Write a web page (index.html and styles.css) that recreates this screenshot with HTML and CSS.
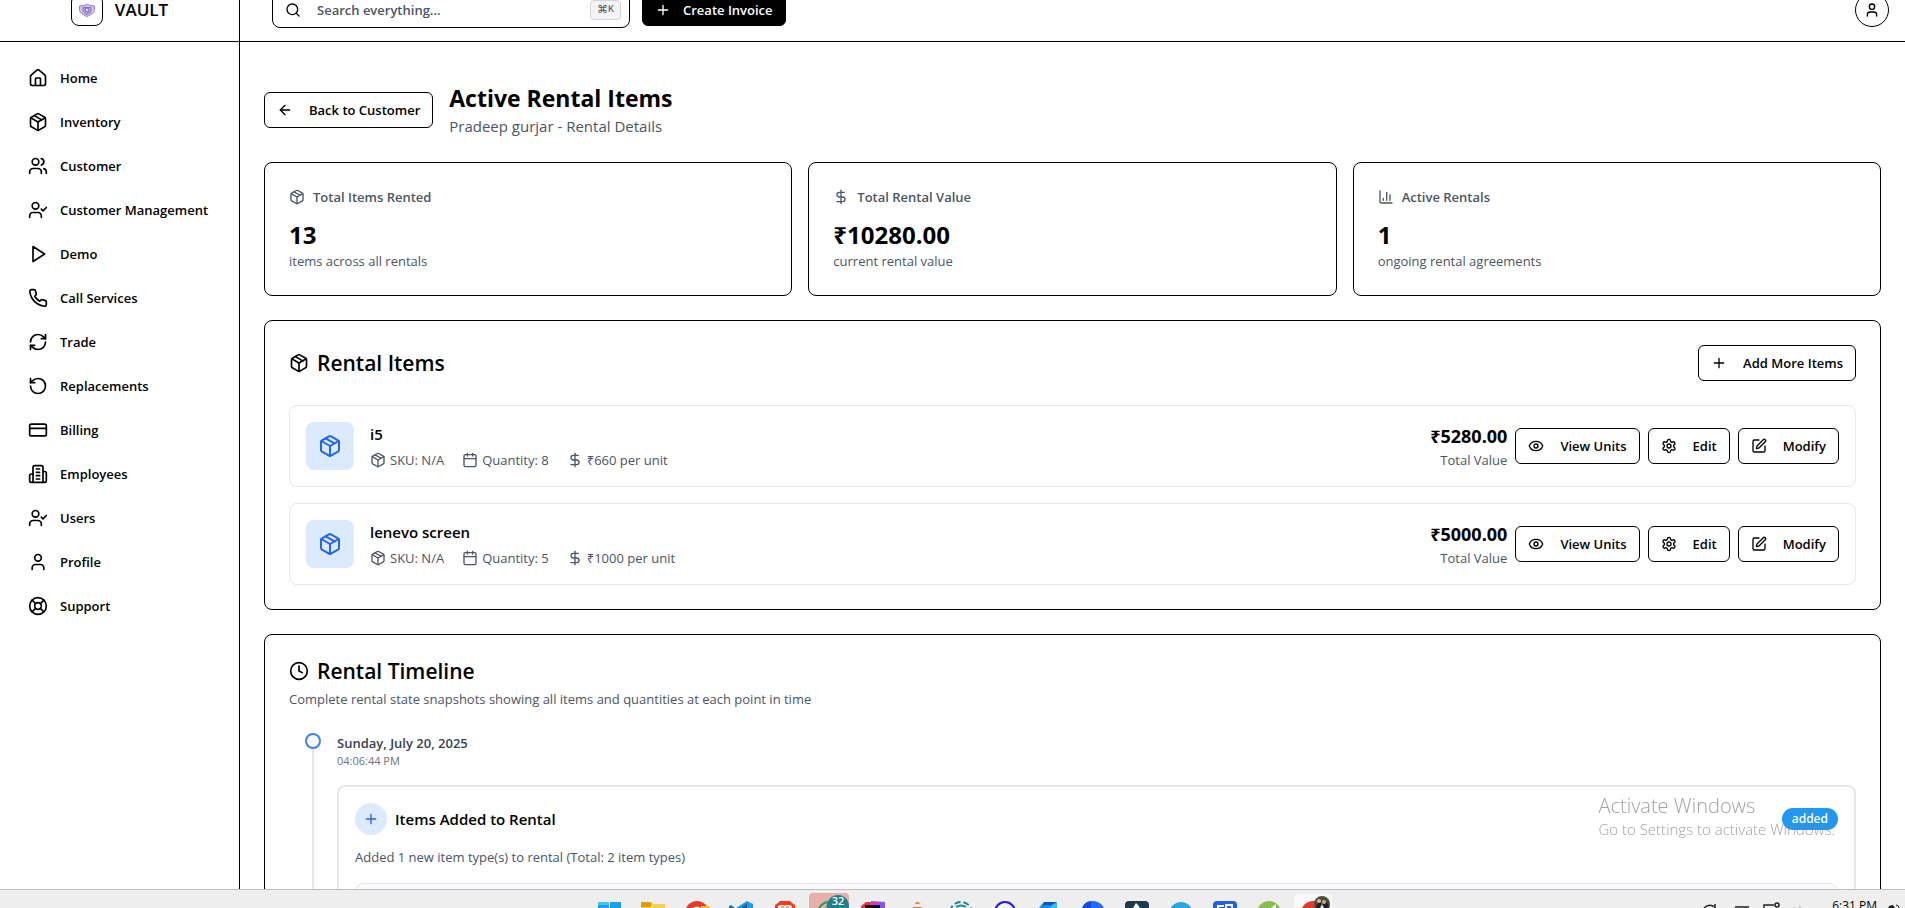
FILE: index.html
```html
<!DOCTYPE html>
<html lang="en">
<head>
<meta charset="utf-8">
<title>Vault – Active Rental Items</title>
<link rel="stylesheet" href="styles.css">
</head>
<body>
<svg class="sprite" aria-hidden="true">
  <symbol id="house" viewBox="0 0 24 24"><path d="M15 21v-8a1 1 0 0 0-1-1h-4a1 1 0 0 0-1 1v8"/><path d="M3 10a2 2 0 0 1 .709-1.528l7-5.999a2 2 0 0 1 2.582 0l7 5.999A2 2 0 0 1 21 10v9a2 2 0 0 1-2 2H5a2 2 0 0 1-2-2z"/></symbol>
  <symbol id="package" viewBox="0 0 24 24"><path d="M11 21.73a2 2 0 0 0 2 0l7-4A2 2 0 0 0 21 16V8a2 2 0 0 0-1-1.73l-7-4a2 2 0 0 0-2 0l-7 4A2 2 0 0 0 3 8v8a2 2 0 0 0 1 1.73z"/><path d="M12 22V12"/><path d="M3.29 7 12 12l8.71-5"/><path d="m7.5 4.27 9 5.15"/></symbol>
  <symbol id="users" viewBox="0 0 24 24"><path d="M16 21v-2a4 4 0 0 0-4-4H6a4 4 0 0 0-4 4v2"/><circle cx="9" cy="7" r="4"/><path d="M22 21v-2a4 4 0 0 0-3-3.87"/><path d="M16 3.13a4 4 0 0 1 0 7.75"/></symbol>
  <symbol id="user-check" viewBox="0 0 24 24"><path d="m16 11 2 2 4-4"/><path d="M16 21v-2a4 4 0 0 0-4-4H6a4 4 0 0 0-4 4v2"/><circle cx="9" cy="7" r="4"/></symbol>
  <symbol id="play" viewBox="0 0 24 24"><path d="M6 3l14 9-14 9z"/></symbol>
  <symbol id="phone" viewBox="0 0 24 24"><path d="M22 16.92v3a2 2 0 0 1-2.18 2 19.79 19.79 0 0 1-8.63-3.07 19.5 19.5 0 0 1-6-6 19.79 19.79 0 0 1-3.07-8.67A2 2 0 0 1 4.11 2h3a2 2 0 0 1 2 1.72 12.84 12.84 0 0 0 .7 2.81 2 2 0 0 1-.45 2.11L8.09 9.91a16 16 0 0 0 6 6l1.27-1.27a2 2 0 0 1 2.11-.45 12.84 12.84 0 0 0 2.81.7A2 2 0 0 1 22 16.92z"/></symbol>
  <symbol id="refresh" viewBox="0 0 24 24"><path d="M3 12a9 9 0 0 1 9-9 9.75 9.75 0 0 1 6.74 2.74L21 8"/><path d="M21 3v5h-5"/><path d="M21 12a9 9 0 0 1-9 9 9.75 9.75 0 0 1-6.74-2.74L3 16"/><path d="M8 16H3v5"/></symbol>
  <symbol id="rotate" viewBox="0 0 24 24"><path d="M3 12a9 9 0 1 0 9-9 9.75 9.75 0 0 0-6.74 2.74L3 8"/><path d="M3 3v5h5"/></symbol>
  <symbol id="card" viewBox="0 0 24 24"><rect width="20" height="14" x="2" y="5" rx="2"/><path d="M2 10h20"/></symbol>
  <symbol id="building" viewBox="0 0 24 24"><path d="M6 22V4a2 2 0 0 1 2-2h8a2 2 0 0 1 2 2v18Z"/><path d="M6 12H4a2 2 0 0 0-2 2v6a2 2 0 0 0 2 2h2"/><path d="M18 9h2a2 2 0 0 1 2 2v9a2 2 0 0 1-2 2h-2"/><path d="M10 6h4M10 10h4M10 14h4M10 18h4"/></symbol>
  <symbol id="user" viewBox="0 0 24 24"><path d="M19 21v-2a4 4 0 0 0-4-4H9a4 4 0 0 0-4 4v2"/><circle cx="12" cy="7" r="4"/></symbol>
  <symbol id="buoy" viewBox="0 0 24 24"><circle cx="12" cy="12" r="10"/><path d="m4.93 4.93 4.24 4.24M14.83 9.17l4.24-4.24M14.83 14.83l4.24 4.24M9.17 14.83l-4.24 4.24"/><circle cx="12" cy="12" r="4"/></symbol>
  <symbol id="search" viewBox="0 0 24 24"><circle cx="11" cy="11" r="8"/><path d="m21 21-4.3-4.3"/></symbol>
  <symbol id="plus" viewBox="0 0 24 24"><path d="M5 12h14M12 5v14"/></symbol>
  <symbol id="arrow-left" viewBox="0 0 24 24"><path d="m12 19-7-7 7-7"/><path d="M19 12H5"/></symbol>
  <symbol id="dollar" viewBox="0 0 24 24"><path d="M12 2v20"/><path d="M17 5H9.5a3.5 3.5 0 0 0 0 7h5a3.5 3.5 0 0 1 0 7H6"/></symbol>
  <symbol id="chart" viewBox="0 0 24 24"><path d="M3 3v16a2 2 0 0 0 2 2h16"/><path d="M18 17V9M13 17V5M8 17v-3"/></symbol>
  <symbol id="calendar" viewBox="0 0 24 24"><path d="M8 2v4M16 2v4"/><rect width="18" height="18" x="3" y="4" rx="2"/><path d="M3 10h18"/></symbol>
  <symbol id="eye" viewBox="0 0 24 24"><path d="M2.062 12.348a1 1 0 0 1 0-.696 10.75 10.75 0 0 1 19.876 0 1 1 0 0 1 0 .696 10.75 10.75 0 0 1-19.876 0"/><circle cx="12" cy="12" r="3"/></symbol>
  <symbol id="gear" viewBox="0 0 24 24"><path d="M12.22 2h-.44a2 2 0 0 0-2 2v.18a2 2 0 0 1-1 1.73l-.43.25a2 2 0 0 1-2 0l-.15-.08a2 2 0 0 0-2.73.73l-.22.38a2 2 0 0 0 .73 2.73l.15.1a2 2 0 0 1 1 1.72v.51a2 2 0 0 1-1 1.74l-.15.09a2 2 0 0 0-.73 2.73l.22.38a2 2 0 0 0 2.73.73l.15-.08a2 2 0 0 1 2 0l.43.25a2 2 0 0 1 1 1.73V20a2 2 0 0 0 2 2h.44a2 2 0 0 0 2-2v-.18a2 2 0 0 1 1-1.73l.43-.25a2 2 0 0 1 2 0l.15.08a2 2 0 0 0 2.73-.73l.22-.39a2 2 0 0 0-.73-2.73l-.15-.08a2 2 0 0 1-1-1.74v-.5a2 2 0 0 1 1-1.74l.15-.09a2 2 0 0 0 .73-2.73l-.22-.38a2 2 0 0 0-2.73-.73l-.15.08a2 2 0 0 1-2 0l-.43-.25a2 2 0 0 1-1-1.73V4a2 2 0 0 0-2-2z"/><circle cx="12" cy="12" r="3"/></symbol>
  <symbol id="pen" viewBox="0 0 24 24"><path d="M12 3H5a2 2 0 0 0-2 2v14a2 2 0 0 0 2 2h14a2 2 0 0 0 2-2v-7"/><path d="M18.375 2.625a1 1 0 0 1 3 3l-9.013 9.014a2 2 0 0 1-.853.505l-2.873.84a.5.5 0 0 1-.62-.62l.84-2.873a2 2 0 0 1 .506-.852z"/></symbol>
  <symbol id="clock" viewBox="0 0 24 24"><circle cx="12" cy="12" r="10"/><path d="M12 6v6l4 2"/></symbol>
</svg>

<div class="app">
  <aside class="sidebar">
    <div class="brand">
      <span class="brand-mark">
        <svg class="brand-logo" viewBox="0 0 18 16"><path d="M9 2 12 3.500 16.500 4v3.500c0 3.500-3 5-7.500 7C4.500 12.500 1.500 11 1.500 7.500V4L6 3.500z" fill="#cfc0ec" stroke="#9a82cc"/><path d="M5 5.500h8v3c0 2-2 3-4 4-2-1-4-2-4-4z" fill="#b7a4de" stroke="#8a73c0"/><circle cx="9" cy="8" r="2" fill="#ded3f3" stroke="#7a64b0"/></svg>
      </span>
      <span class="brand-name">VAULT</span>
    </div>
    <nav class="nav">
      <a href="#"><svg class="icon md"><use href="#house"/></svg>Home</a>
      <a href="#"><svg class="icon md"><use href="#package"/></svg>Inventory</a>
      <a href="#"><svg class="icon md"><use href="#users"/></svg>Customer</a>
      <a href="#"><svg class="icon md"><use href="#user-check"/></svg>Customer Management</a>
      <a href="#"><svg class="icon md"><use href="#play"/></svg>Demo</a>
      <a href="#"><svg class="icon md"><use href="#phone"/></svg>Call Services</a>
      <a href="#"><svg class="icon md"><use href="#refresh"/></svg>Trade</a>
      <a href="#"><svg class="icon md"><use href="#rotate"/></svg>Replacements</a>
      <a href="#"><svg class="icon md"><use href="#card"/></svg>Billing</a>
      <a href="#"><svg class="icon md"><use href="#building"/></svg>Employees</a>
      <a href="#"><svg class="icon md"><use href="#user-check"/></svg>Users</a>
      <a href="#"><svg class="icon md"><use href="#user"/></svg>Profile</a>
      <a href="#"><svg class="icon md"><use href="#buoy"/></svg>Support</a>
    </nav>
  </aside>

  <div class="page">
    <header class="topbar">
      <label class="search">
        <svg class="icon"><use href="#search"/></svg>
        <input type="text" placeholder="Search everything..." aria-label="Search everything">
        <kbd><span class="cmd">⌘</span>K</kbd>
      </label>
      <button class="btn primary"><svg class="icon"><use href="#plus"/></svg>Create Invoice</button>
      <button class="avatar" aria-label="Account"><svg class="icon"><use href="#user"/></svg></button>
    </header>

    <main class="content">
      <div class="page-head">
        <button class="btn"><svg class="icon"><use href="#arrow-left"/></svg>Back to Customer</button>
        <div>
          <h1>Active Rental Items</h1>
          <p class="lead">Pradeep gurjar - Rental Details</p>
        </div>
      </div>

      <div class="stats">
        <section class="card">
          <h2 class="stat-label"><svg class="icon"><use href="#package"/></svg>Total Items Rented</h2>
          <p class="stat-value">13</p>
          <p class="muted">items across all rentals</p>
        </section>
        <section class="card">
          <h2 class="stat-label"><svg class="icon"><use href="#dollar"/></svg>Total Rental Value</h2>
          <p class="stat-value">₹10280.00</p>
          <p class="muted">current rental value</p>
        </section>
        <section class="card">
          <h2 class="stat-label"><svg class="icon"><use href="#chart"/></svg>Active Rentals</h2>
          <p class="stat-value">1</p>
          <p class="muted">ongoing rental agreements</p>
        </section>
      </div>

      <section class="card items">
        <div class="items-head">
          <h2 class="section-title"><svg class="icon md"><use href="#package"/></svg>Rental Items</h2>
          <button class="btn"><svg class="icon"><use href="#plus"/></svg>Add More Items</button>
        </div>
        <article class="item">
          <span class="thumb"><svg class="icon lg"><use href="#package"/></svg></span>
          <div class="item-info">
            <h3>i5</h3>
            <div class="meta">
              <span><svg class="icon"><use href="#package"/></svg>SKU: N/A</span>
              <span><svg class="icon"><use href="#calendar"/></svg>Quantity: 8</span>
              <span><svg class="icon"><use href="#dollar"/></svg>₹660 per unit</span>
            </div>
          </div>
          <div class="total"><strong>₹5280.00</strong><span class="muted">Total Value</span></div>
          <button class="btn"><svg class="icon"><use href="#eye"/></svg>View Units</button>
          <button class="btn"><svg class="icon"><use href="#gear"/></svg>Edit</button>
          <button class="btn"><svg class="icon"><use href="#pen"/></svg>Modify</button>
        </article>
        <article class="item">
          <span class="thumb"><svg class="icon lg"><use href="#package"/></svg></span>
          <div class="item-info">
            <h3>lenevo screen</h3>
            <div class="meta">
              <span><svg class="icon"><use href="#package"/></svg>SKU: N/A</span>
              <span><svg class="icon"><use href="#calendar"/></svg>Quantity: 5</span>
              <span><svg class="icon"><use href="#dollar"/></svg>₹1000 per unit</span>
            </div>
          </div>
          <div class="total"><strong>₹5000.00</strong><span class="muted">Total Value</span></div>
          <button class="btn"><svg class="icon"><use href="#eye"/></svg>View Units</button>
          <button class="btn"><svg class="icon"><use href="#gear"/></svg>Edit</button>
          <button class="btn"><svg class="icon"><use href="#pen"/></svg>Modify</button>
        </article>
      </section>

      <section class="card">
        <h2 class="section-title"><svg class="icon md"><use href="#clock"/></svg>Rental Timeline</h2>
        <p class="muted intro">Complete rental state snapshots showing all items and quantities at each point in time</p>
        <div class="timeline">
          <div class="rail"><span class="dot"></span><span class="line"></span></div>
          <div class="entry">
            <h3 class="date">Sunday, July 20, 2025</h3>
            <p class="time">04:06:44 PM</p>
            <article class="event">
              <div class="event-head">
                <span class="event-icon"><svg class="icon"><use href="#plus"/></svg></span>
                <h4>Items Added to Rental</h4>
                <span class="badge">added</span>
              </div>
              <p class="muted">Added 1 new item type(s) to rental (Total: 2 item types)</p>
              <div class="snapshot"></div>
            </article>
          </div>
        </div>
      </section>
    </main>
  </div>
</div>

<div class="watermark">
  <p class="wm-title">Activate Windows</p>
  <p>Go to Settings to activate Windows.</p>
</div>

<footer class="taskbar">
  <div class="apps">
    <svg viewBox="0 0 44 18"><path d="M11 12h11v6H11zM23 12h11v6H23z" fill="#1b9de8"/><path d="M11 12h11v3H11z" fill="#45c6fb"/></svg>
    <svg viewBox="0 0 44 18"><path d="M10 12h10l2 2h12v4H10z" fill="#f8cd55"/><path d="M10 12h9l2 2-2 3h-9z" fill="#dc9f0c"/></svg>
    <svg viewBox="0 0 44 18"><circle cx="22" cy="23" r="12" fill="#e33b2e"/><path d="M18 18q4-3 8 0z" fill="#fff"/><path d="M26 16h8l2 4H26z" fill="#fbbf12"/></svg>
    <svg viewBox="0 0 44 18"><path d="M17 18 28 11l6 3v4z" fill="#1e9be4"/><path d="m10 16 2-1 4 3h-6z" fill="#0877bd"/><path d="m22 18 6-5v5z" fill="#0968a8"/></svg>
    <svg viewBox="0 0 44 18"><path d="m12 15 3-2 2-2h10l2 2 3 2v3H12z" fill="#fb3a16"/><path d="M15 16l3-1h3l1 1 1-1h3l3 1v2H15z" fill="#fff"/><path d="M18 17h3M23 17h3" stroke="#fb3a16"/></svg>
    <svg viewBox="0 0 44 18"><rect x="2" y="3" width="40" height="24" rx="4" fill="#e8aeaa"/><circle cx="22" cy="23" r="11" fill="none" stroke="#259a58" stroke-width="2"/><path d="M18 18q3-5 6-5" stroke="#259a58" fill="none"/><circle cx="31" cy="16" r="11" fill="#207f8c"/><text x="31" y="15" class="count">32</text></svg>
    <svg viewBox="0 0 44 18"><path d="m10 16 5-4h8l-3 6H10z" fill="#ee315d"/><path d="m20 11 14 1v6H20z" fill="#8655e9"/><path d="M20 12h8l-4 3z" fill="#ff2f88"/><path d="M14 15h15v3H14z" fill="#080808"/></svg>
    <svg viewBox="0 0 44 18"><path d="m20 12 3-1 3 7h-7z" fill="#f1f1f1"/><path d="m20 14 1-2h3l1 2z" fill="#ef8632"/><path d="M18 18h9v-1h-9z" fill="#dc782d"/></svg>
    <svg viewBox="0 0 44 18"><circle cx="22" cy="23" r="11" fill="none" stroke="#158c87" stroke-width="2" stroke-dasharray="6 3"/><path d="M17 17q5-3 10 0" stroke="#158c87" stroke-width="2" fill="none"/></svg>
    <svg viewBox="0 0 44 18"><circle cx="22" cy="22" r="10" fill="#f4f4ff" stroke="#2118e6" stroke-width="2"/></svg>
    <svg viewBox="0 0 44 18"><path d="m15 14 2-2h13l-5 6H12z" fill="#168bea"/><path d="m17 12h13l-3 3h-11z" fill="#0755bc"/><path d="m25 15 5-3v6h-7z" fill="#36bced"/></svg>
    <svg viewBox="0 0 44 18"><circle cx="22" cy="23" r="12" fill="#246bfd"/><path d="M11 18q2-6 9-7v7z" fill="#124bdd"/></svg>
    <svg viewBox="0 0 44 18"><rect x="10" y="11" width="24" height="24" rx="4" fill="#1e3a4c"/><path d="m21 13 2 2 2 3h-7z" fill="#fff"/></svg>
    <svg viewBox="0 0 44 18"><circle cx="22" cy="24" r="12" fill="#2ba7df"/></svg>
    <svg viewBox="0 0 44 18"><rect x="10" y="11" width="24" height="24" rx="4" fill="#235fe5"/><path d="M15 18v-2h6m2 2v-3h6v3" stroke="#fff" stroke-width="2" fill="none"/></svg>
    <svg viewBox="0 0 44 18"><circle cx="22" cy="23" r="12" fill="#8abc50"/><path d="m24 18 5-4v4z" fill="#f5f8ed"/></svg>
    <svg viewBox="0 0 44 18"><rect x="3" y="4" width="38" height="24" rx="4" fill="#f9f9f9"/><circle cx="22" cy="23" r="12" fill="#e33b2e"/><circle cx="31" cy="14" r="8" fill="#47503b"/><path d="m25 16 3-4 3 2 4-3 3 5v2H25z" fill="#241e27"/><circle cx="28" cy="11" r="2" fill="#e3b48f"/><circle cx="33" cy="12" r="2" fill="#d1a68c"/><path d="m29 18 2-4 2 4z" fill="#dedee8"/></svg>
  </div>
  <div class="tray">
    <svg class="tray-icons" viewBox="0 0 124 18" fill="none" stroke="#222" stroke-width="1.500"><path d="M6 18q5-5 11-1M17 14v4M37 17h14M66 18v-3h10"/><circle cx="79" cy="15" r="2"/><path d="M96 17v1M102 16v2" stroke="#999" stroke-width="1"/></svg>
    <time>6:31 PM</time>
    <svg class="bell" viewBox="0 0 14 18"><path d="M1 18q1-3 5-3l2 3z" fill="#222"/><path d="M9 15q3 0 3 3" stroke="#222" fill="none"/></svg>
  </div>
</footer>
</body>
</html>
```
FILE: styles.css
```css
* { box-sizing: border-box; margin: 0; }

body {
  height: 100vh;
  overflow: hidden;
  background: #fff;
  color: #000;
  font: 400 13px/20px "Open Sans", "Noto Sans", sans-serif;
}

h1, h2, h3, h4 { font-size: inherit; font-weight: 600; }

.sprite { position: absolute; width: 0; height: 0; }

.icon {
  flex: none;
  width: 16px;
  height: 16px;
  fill: none;
  stroke: currentColor;
  stroke-width: 2;
  stroke-linecap: round;
  stroke-linejoin: round;
}
.icon.md { width: 20px; height: 20px; }
.icon.lg { width: 24px; height: 24px; }

/* The window is scrolled part of the way past the top bar. */
.app {
  display: flex;
  height: calc(100vh + 22px);
  margin-top: -22px;
  overflow: hidden;
}

.sidebar {
  flex: none;
  width: 240px;
  border-right: 1px solid #000;
}

.brand {
  display: flex;
  align-items: center;
  justify-content: center;
  gap: 12px;
  height: 64px;
  border-bottom: 1px solid #000;
}
.brand-mark {
  display: grid;
  place-items: center;
  width: 32px;
  height: 32px;
  border: 1px solid #000;
  border-radius: 8px;
}
.brand-logo { width: 18px; height: 16px; }
.brand-name { font-size: 17px; font-weight: 600; }

.nav {
  display: flex;
  flex-direction: column;
  gap: 4px;
  padding: 16px;
}
.nav a {
  display: flex;
  align-items: center;
  gap: 12px;
  height: 40px;
  padding: 0 12px;
  color: #000;
  font-weight: 600;
  text-decoration: none;
  white-space: nowrap;
}

.page { flex: 1; min-width: 0; }

.topbar {
  display: flex;
  align-items: center;
  gap: 12px;
  height: 64px;
  padding: 0 16px 0 32px;
  border-bottom: 1px solid #000;
}
.search {
  display: flex;
  align-items: center;
  gap: 16px;
  width: 358px;
  height: 36px;
  padding: 0 8px 0 12px;
  border: 1px solid #000;
  border-radius: 8px;
}
.search input {
  flex: 1;
  min-width: 0;
  padding: 0;
  border: 0;
  outline: 0;
  background: none;
  font: inherit;
  font-weight: 600;
}
.search input::placeholder { color: #4b5563; opacity: 1; }
kbd {
  display: flex;
  align-items: center;
  justify-content: center;
  width: 31px;
  height: 20px;
  border: 1px solid #d1d5db;
  border-radius: 4px;
  background: #f3f4f6;
  color: #4b5563;
  font: 10px "Liberation Mono", monospace;
}
.cmd { font-family: "DejaVu Sans", sans-serif; font-size: 11px; }

.btn {
  display: inline-flex;
  flex: none;
  align-items: center;
  gap: 16px;
  height: 36px;
  padding: 0 12px;
  border: 1px solid #000;
  border-radius: 6px;
  background: #fff;
  color: #000;
  font: inherit;
  font-weight: 600;
  white-space: nowrap;
}
.btn.primary {
  gap: 12px;
  height: 32px;
  background: #000;
  color: #fff;
}
.avatar {
  display: grid;
  place-items: center;
  width: 34px;
  height: 34px;
  margin-left: auto;
  padding: 0;
  border: 1px solid #000;
  border-radius: 50%;
  background: #fff;
  color: #000;
}

.content {
  display: flex;
  flex-direction: column;
  gap: 24px;
  padding: 40px 24px 24px;
}

.page-head { display: flex; align-items: center; gap: 16px; }
h1 { font-size: 23px; font-weight: 700; line-height: 32px; }
.lead { color: #4b5563; font-size: 15px; line-height: 24px; }

.stats { display: grid; grid-template-columns: repeat(3, 1fr); gap: 16px; }

.card {
  padding: 24px;
  border: 1px solid #000;
  border-radius: 8px;
}
.muted { color: #4b5563; }

.stat-label {
  display: flex;
  align-items: center;
  gap: 8px;
  margin-bottom: 12px;
  color: #4b5563;
}
.stat-value { font-size: 24px; font-weight: 700; line-height: 32px; }

.section-title {
  display: flex;
  align-items: center;
  gap: 8px;
  font-size: 21px;
  line-height: 24px;
}

.items { display: flex; flex-direction: column; gap: 16px; }
.items-head {
  display: flex;
  align-items: center;
  justify-content: space-between;
  margin-bottom: 8px;
}

.item {
  display: flex;
  align-items: center;
  gap: 8px;
  padding: 16px;
  border: 1px solid #e5e7eb;
  border-radius: 8px;
}
.thumb {
  display: grid;
  place-items: center;
  width: 48px;
  height: 48px;
  margin-right: 8px;
  border-radius: 8px;
  background: #dbeafe;
  color: #2563eb;
}
.item-info { flex: 1; }
.item-info h3 { margin-bottom: 4px; font-size: 15px; line-height: 24px; }
.meta { display: flex; gap: 18px; color: #4b5563; }
.meta span { display: flex; align-items: center; gap: 4px; }
.total { display: flex; flex-direction: column; text-align: right; }
.total strong { font-size: 18px; font-weight: 700; line-height: 28px; }

.intro { margin-top: 6px; }

.timeline { display: flex; gap: 16px; padding: 24px 0 0 16px; }
.rail {
  display: flex;
  flex-direction: column;
  align-items: center;
  width: 16px;
}
.dot {
  width: 16px;
  height: 16px;
  border: 2px solid #3b82f6;
  border-radius: 50%;
  background: #fff;
}
.line { flex: 1; width: 2px; background: #e5e7eb; }
.entry { flex: 1; }
.date { color: #374151; }
.time { color: #6b7280; font-size: 11px; line-height: 16px; }

.event {
  margin-top: 16px;
  padding: 16px;
  border: 2px solid #e5e7eb;
  border-radius: 8px;
}
.event-head { display: flex; align-items: center; gap: 8px; margin-bottom: 12px; }
.event-icon {
  display: grid;
  place-items: center;
  width: 32px;
  height: 32px;
  border-radius: 50%;
  background: #dbeafe;
  color: #2563eb;
}
.event h4 { font-size: 15px; }
.badge {
  margin-left: auto;
  padding: 1px 10px;
  border-radius: 11px;
  background: #2196f3;
  color: #fff;
  font-size: 12px;
  font-weight: 600;
}
.snapshot {
  height: 120px;
  margin-top: 16px;
  border: 1px solid #e5e7eb;
  border-radius: 8px;
  background: #f9fafb;
}

.watermark {
  position: fixed;
  right: 70px;
  bottom: 68px;
  color: rgba(130, 130, 130, .75);
  font-size: 15px;
  font-weight: 300;
  line-height: 22px;
}
.wm-title { font-size: 20px; line-height: 24px; }

.taskbar {
  position: fixed;
  right: 0;
  bottom: 0;
  left: 0;
  display: flex;
  justify-content: center;
  height: 19px;
  border-top: 1px solid #bdbdbd;
  background: #eee;
  overflow: hidden;
}
.apps { display: flex; padding-left: 16px; }
.apps svg { width: 44px; height: 18px; }
.count {
  fill: #fff;
  font-size: 11px;
  font-weight: 600;
  text-anchor: middle;
}
.tray {
  position: absolute;
  top: 0;
  right: 4px;
  display: flex;
  gap: 10px;
}
.tray-icons { width: 124px; height: 18px; }
.tray time { padding-top: 7px; font-size: 12px; line-height: 18px; }
.bell { width: 14px; height: 18px; }
```
